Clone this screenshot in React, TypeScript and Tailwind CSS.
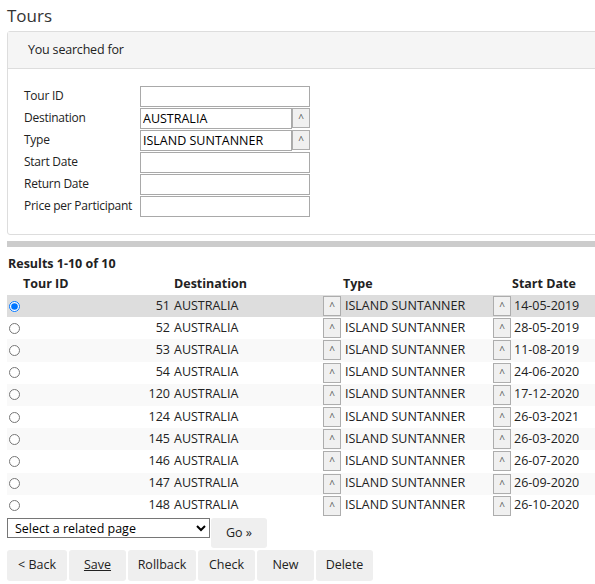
import { useState } from 'react';

type Tour = {
  id: number;
  destination: string;
  type: string;
  startDate: string;
}

const tours: Tour[] = [
  { id: 51, destination: "AUSTRALIA", type: "ISLAND SUNTANNER", startDate: "14-05-2019" },
  { id: 52, destination: "AUSTRALIA", type: "ISLAND SUNTANNER", startDate: "28-05-2019" },
  { id: 53, destination: "AUSTRALIA", type: "ISLAND SUNTANNER", startDate: "11-08-2019" },
  { id: 54, destination: "AUSTRALIA", type: "ISLAND SUNTANNER", startDate: "24-06-2020" },
  { id: 120, destination: "AUSTRALIA", type: "ISLAND SUNTANNER", startDate: "17-12-2020" },
  { id: 124, destination: "AUSTRALIA", type: "ISLAND SUNTANNER", startDate: "26-03-2021" },
  { id: 145, destination: "AUSTRALIA", type: "ISLAND SUNTANNER", startDate: "26-03-2020" },
  { id: 146, destination: "AUSTRALIA", type: "ISLAND SUNTANNER", startDate: "26-07-2020" },
  { id: 147, destination: "AUSTRALIA", type: "ISLAND SUNTANNER", startDate: "26-09-2020" },
  { id: 148, destination: "AUSTRALIA", type: "ISLAND SUNTANNER", startDate: "26-10-2020" },
];

const LookupButton = () => (
  <button className="w-[18px] h-[20px] border border-[#adadad] bg-[#f0f0f0] text-[10px] leading-none text-[#555] flex items-center justify-center shrink-0">
    ^
  </button>
);

const FieldRow = ({ label, value, lookup }: { label: string; value?: string; lookup?: boolean }) => (
  <div className="flex items-center h-[22px]">
    <label className="w-[116px] shrink-0 whitespace-nowrap text-[12px] tracking-[-0.25px]">{label}</label>
    <div className="flex w-[170px] h-[21px]">
      <input
        readOnly
        value={value || ""}
        className="flex-1 min-w-0 h-full border border-[#a9a9a9] px-[2px] text-[12.5px] text-black outline-none"
      />
      {lookup && <LookupButton />}
    </div>
  </div>
);

const App = () => {
  const [selected, setSelected] = useState(51);

  return (
    <div
      className="w-[595px] h-[584px] overflow-hidden bg-white text-[13px] text-[#222] pl-[7px]"
      style={{ fontFamily: '"Open Sans", "Noto Sans", sans-serif' }}
    >
      {/* Title */}
      <h1 className="text-[17px] leading-[31px] text-[#333]">Tours</h1>

      {/* Search panel */}
      <div className="w-[600px] border border-[#ddd] rounded-tl-[3px] rounded-bl-[3px]">
        <div className="h-[37px] bg-[#f5f5f5] border-b border-[#ddd] flex items-center pl-[20px] text-[12.5px] tracking-[-0.2px]">
          You searched for
        </div>
        <div className="pl-[16px] pt-[16px] pb-[17px] flex flex-col text-[12.5px]">
          <FieldRow label="Tour ID" />
          <FieldRow label="Destination" value="AUSTRALIA" lookup />
          <FieldRow label="Type" value="ISLAND SUNTANNER" lookup />
          <FieldRow label="Start Date" />
          <FieldRow label="Return Date" />
          <FieldRow label="Price per Participant" />
        </div>
      </div>

      <div className="h-[6px] bg-[#cccccc] mt-[6px]" />

      {/* Results */}
      <div className="font-bold text-[12.5px] mt-[10px] leading-[14px] pl-[1px]">Results 1-10 of 10</div>
      <table className="table-fixed w-[588px] border-collapse text-[12.5px] mt-[3px]">
        <colgroup>
          <col className="w-[15px]" />
          <col className="w-[151px]" />
          <col className="w-[149px]" />
          <col className="w-[169px]" />
          <col />
        </colgroup>
        <thead>
          <tr className="h-[21px] font-bold">
            <th />
            <th className="text-left pl-[1px]">Tour ID</th>
            <th className="text-left pl-[1px]">Destination</th>
            <th className="text-left pl-[21px]">Type</th>
            <th className="text-left pl-[21px]">Start Date</th>
          </tr>
        </thead>
        <tbody>
          {tours.map((t, i) => {
            const isSelected = t.id === selected;
            const rowBg = isSelected ? 'bg-[#dddddd]' : i % 2 === 1 ? 'bg-white' : 'bg-[#f9f9f9]';
            return (
              <tr key={t.id} className={`h-[22.2px] ${rowBg}`} onClick={() => setSelected(t.id)}>
                <td className="align-middle">
                  <input
                    type="radio"
                    name="tour"
                    checked={isSelected}
                    onChange={() => setSelected(t.id)}
                    className="w-[11px] h-[11px] ml-[2px] block accent-[#0075ff]"
                  />
                </td>
                <td className="text-right pr-[3px]">{t.id}</td>
                <td className="pl-[1px]">{t.destination}</td>
                <td>
                  <div className="flex items-center gap-[4px] pl-[1px]">
                    <LookupButton />
                    <span>{t.type}</span>
                  </div>
                </td>
                <td>
                  <div className="flex items-center gap-[3px] pl-[2px]">
                    <LookupButton />
                    <span>{t.startDate}</span>
                  </div>
                </td>
              </tr>
            );
          })}
        </tbody>
      </table>

      {/* Related page */}
      <div className="flex items-start mt-[1px]">
        <select className="w-[203px] h-[20px] border border-[#767676] text-[12.5px] px-[3px] bg-white text-black">
          <option>Select a related page</option>
        </select>
        <button className="w-[56px] h-[30px] bg-[#efefef] rounded-[3px] ml-[1px] text-[12.5px]">Go »</button>
      </div>

      {/* Action buttons */}
      <div className="flex gap-[2px] mt-[2px] text-[12.5px]">
        <button className="w-[60px] h-[31px] bg-[#efefef] rounded-[3px]">&lt; Back</button>
        <button className="w-[57px] h-[31px] bg-[#efefef] rounded-[3px] underline">Save</button>
        <button className="w-[68px] h-[31px] bg-[#efefef] rounded-[3px]">Rollback</button>
        <button className="w-[57px] h-[31px] bg-[#efefef] rounded-[3px]">Check</button>
        <button className="w-[57px] h-[31px] bg-[#efefef] rounded-[3px]">New</button>
        <button className="w-[57px] h-[31px] bg-[#efefef] rounded-[3px]">Delete</button>
      </div>
    </div>
  )
}

export default App;
